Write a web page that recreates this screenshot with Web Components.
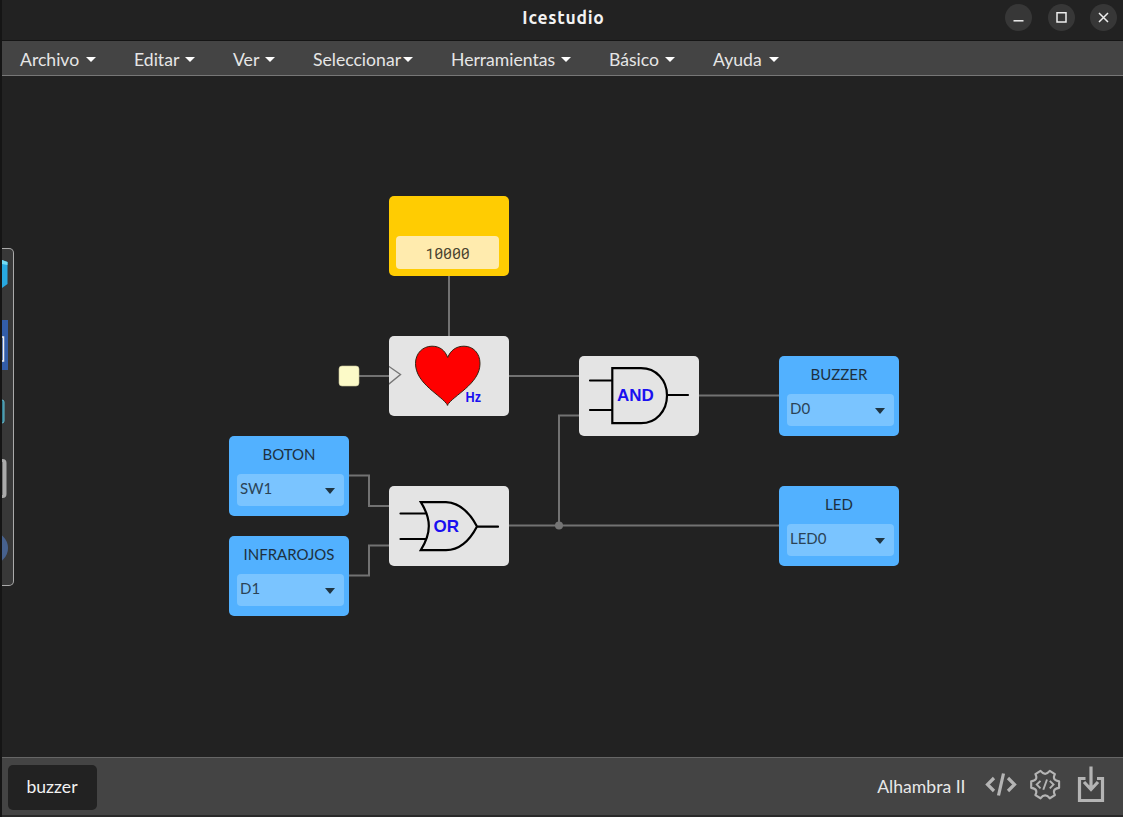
<!DOCTYPE html>
<html lang="es">
<head>
<meta charset="utf-8">
<title>Icestudio</title>
<style>
html,body{margin:0;height:100%;background:#222;overflow:hidden}
body{font-family:Lato,"Open Sans",sans-serif;color:#eee}
</style>
</head>
<body>
<ice-app></ice-app>
<script>
const define = (name, html, setup) => customElements.define(name, class extends HTMLElement {
  connectedCallback() {
    if (this.shadowRoot) return;
    const t = document.createElement('template');
    t.innerHTML = html;
    this.attachShadow({mode: 'open'}).append(t.content.cloneNode(true));
    if (setup) setup(this, this.shadowRoot);
  }
});
const place = el => {
  el.style.left = el.getAttribute('x') + 'px';
  el.style.top = el.getAttribute('y') + 'px';
};

define('window-button', `<style>
:host{display:block;width:27px;height:27px;border-radius:50%;background:#373737}
svg{display:block} path{fill:none;stroke:#eee;stroke-width:1.5}
</style><svg width="27" height="27"><path/></svg>`, (el, r) => {
  r.querySelector('path').setAttribute('d', {
    min: 'M8.5 16.800H18.5', max: 'M9 8.8H18V18H9Z', close: 'M9 9L18 18M18 9L9 18'
  }[el.getAttribute('kind')]);
});

define('title-bar', `<style>
:host{display:grid;grid-template-columns:1fr auto 1fr;align-items:center;height:41px;box-sizing:border-box;padding:0 6px 5px 8px;border-bottom:1px solid #151515;background:#222}
h1{grid-column:2;margin:0;font:bold 17.5px/24px Ubuntu,"Noto Sans",sans-serif;color:#f2f2f2;letter-spacing:.75px}
div{display:flex;justify-content:flex-end;gap:15.5px}
</style><h1><slot></slot></h1><div><window-button kind="min"></window-button><window-button kind="max"></window-button><window-button kind="close"></window-button></div>`);

define('menu-item', `<style>
:host{display:flex;justify-content:space-between;align-items:center;white-space:nowrap;font-size:17.6px;line-height:34px}
span{padding-top:2px;height:34px;box-sizing:border-box;line-height:33px}
i{width:0;height:0;border:5px solid transparent;border-top-color:#fff;border-bottom:0;margin-top:2px}
</style><span><slot></slot></span><i></i>`, el => { el.style.width = el.getAttribute('w') + 'px'; });

define('menu-bar', `<style>
:host{display:flex;gap:38px;height:35px;box-sizing:border-box;padding-left:18px;background:#444;border-bottom:1px solid #777;color:#e6e6e6}
</style><slot></slot>`);

define('pin-block', `<style>
:host{position:absolute;width:120px;height:80px;box-sizing:border-box;padding:7.5px 5.5px 5px 7.5px;border-radius:5px;background:#52b1ff;color:#1d3040;display:flex;flex-direction:column}
.n{font-size:15px;line-height:21px;text-align:center;height:30px;padding-right:2px}
.s{display:flex;justify-content:space-between;height:32px;box-sizing:border-box;border-radius:4px;background:#7ac4ff;padding:0 8.8px 0 3.5px;font-size:15px;line-height:29px;color:#2b4356}
i{border:5.5px solid transparent;border-top:6.5px solid #1f3442;border-bottom:0;height:0;margin-top:14.5px}
</style><div class="n"><slot></slot></div><div class="s"><span></span><i></i></div>`, (el, r) => {
  place(el); r.querySelector('span').textContent = el.getAttribute('pin');
});

define('constant-block', `<style>
:host{position:absolute;width:120px;height:80px;box-sizing:border-box;padding:40px 10px 7px 7px;border-radius:5px;background:#ffcc02}
div{height:33px;border-radius:4px;background:#ffebae;color:#49422f;font:15px/35px "Roboto Mono","Noto Sans Mono","DejaVu Sans Mono",monospace;text-align:center;letter-spacing:-.2px}
</style><div><slot></slot></div>`, place);

define('logic-block', `<style>
:host{position:absolute;width:120px;height:80px;border-radius:5px;background:#e4e4e4;overflow:hidden}
svg{display:block} path{fill:none;stroke:#000;stroke-width:2.2;stroke-linecap:round}
text{font:bold 17px "Liberation Sans",Arial,sans-serif;fill:#1a10f0}
</style><svg width="120" height="80"></svg>`, (el, r) => {
  place(el);
  r.querySelector('svg').innerHTML = {
    heart: '<path d="M0 30.500L11.500 38.500L0 48" style="stroke:#777;stroke-width:1.400"/><path d="M58.500 69C53 59.500 26.500 48 26.500 27.500C26.500 17 34 10.200 43 10.200C51 10.200 56 14.500 58.700 21.500C61.500 14.500 67 10.200 75 10.200C84 10.200 91 17 91 27.500C91 48 64 59.500 58.500 69Z" style="fill:#f00;stroke:#321;stroke-width:1"/><text x="76.500" y="66" textLength="15.500" lengthAdjust="spacingAndGlyphs" style="font-size:14px">Hz</text>',
    and: '<path d="M33.300 12.200H62C77 12.200 88 24 88 39.500C88 55 77 67.200 62 67.200H33.300ZM11 24.500H33M11 54H33M88 39H109"/><text x="38" y="45">AND</text>',
    or: '<path d="M31.800 16.200H57C72 17 82 29 88 40.500C82 52 72 64 57 64.200H31.800C42.500 47 42.500 33 31.800 16.200ZM11.500 27.500H37M11.500 53H37M88 40.700H109"/><text x="44.500" y="46">OR</text>'
  }[el.getAttribute('kind')];
});

define('wire-layer', `<style>
:host{position:absolute;inset:0} svg{display:block}
path{fill:none;stroke:#727272;stroke-width:2}
</style><svg width="1123" height="681" viewBox="0 76 1123 681">
<path d="M449 276V337M359 376H389M509 376H579M699 395.500H779M349 475.500H369V506H389M349 575.500H369V545.500H389M509 525.500H779M559 525.500V415.500H579"/>
<circle cx="559" cy="525.500" r="4" fill="#757575"/>
<rect x="339" y="366" width="20" height="20" rx="3" fill="#fcfac8" stroke="#c9c69b" stroke-width=".6"/></svg>`);

define('side-palette', `<style>
:host{position:absolute;left:2px;top:172px;width:12px;height:338px;box-sizing:border-box;border:1px solid #aaa;border-left:0;border-radius:0 5px 5px 0;background:#383838;overflow:hidden}
svg{display:block}
</style><svg width="11" height="336" viewBox="2 249 11 336">
<path d="M2 260L7.500 262V284L2 288Z" fill="#28a8e0"/><path d="M2 260L7.500 262V265L2 264Z" fill="#74dcf5"/>
<path d="M2 320H8V370H2Z" fill="#335da8"/><path d="M2 337H3.500V361H2" fill="none" stroke="#eee" stroke-width="1.500"/>
<rect x="-4" y="400" width="8" height="23" rx="2" fill="#347d91" stroke="#65bdd0"/>
<rect x="-6" y="459" width="12.500" height="39" rx="4" fill="#aaa"/><rect x="-6" y="462" width="9" height="33" fill="#777"/>
<circle cx="-8" cy="548" r="16" fill="#47618d"/></svg>`);

define('design-canvas', `<style>
:host{display:block;position:relative;flex:1;background:#222}
</style><slot></slot>`);

define('tool-icon', `<style>
:host{display:block} svg{display:block}
path{fill:none;stroke:#b4b4b4;stroke-width:3.2}
</style><svg width="36" height="40"><path/></svg>`, (el, r) => {
  const k = el.getAttribute('kind'), s = r.querySelector('svg');
  s.innerHTML = {
    code: '<path d="M11 13L4.500 19.500L11 26M25 13L31.500 19.500L25 26M20.500 8.500L15.500 30.500"/>',
    gear: '<g transform="translate(1.400 1) scale(.93)"><path style="stroke-width:2.300;stroke-linejoin:round" d="M13 5.300Q18 11.500 23 5.300L28.500 8.700Q25 15.500 33 16.500V23.500Q25 24.500 28.500 31.300L23 34.700Q18 28.500 13 34.700L7.500 31.300Q11 24.500 3 23.500V16.500Q11 15.500 7.500 8.700Z"/><path style="stroke-width:2.100" d="M13 16L9 20L13 24M23 16L27 20L23 24M20 14.500L16 25.500"/></g>',
    save: '<path d="M12.500 13.500H6.500V35.500H29.500V13.500H24M18 1.500V24M11 17L18 24.500L25 17"/>'
  }[k];
});

define('status-bar', `<style>
:host{display:flex;align-items:center;height:60px;box-sizing:border-box;background:#444;border-top:1px solid #666;border-bottom:2px solid #292929;padding:0 14px 0 6px}
.tab{width:89px;height:45px;border-radius:5px;background:#222;text-align:center;font-size:17.6px;line-height:43px;color:#f1f1f1;margin-top:2px;padding-right:1px;box-sizing:border-box}
.board{font-size:17.6px;color:#e8e8e8;margin:0 17.5px 0 auto}
.icons{display:flex;margin-top:-4px}
tool-icon{margin-right:8px} tool-icon:nth-child(2){margin-right:10px} tool-icon:last-child{margin:0}
</style><div class="tab"><slot name="tab"></slot></div><div class="board"><slot name="board"></slot></div>
<div class="icons"><tool-icon kind="code"></tool-icon><tool-icon kind="gear"></tool-icon><tool-icon kind="save"></tool-icon></div>`);

define('ice-app', `<style>
:host{display:flex;flex-direction:column;height:817px;width:1123px;box-sizing:border-box;border-left:2px solid #151515;overflow:hidden}
design-canvas{margin-left:-2px;border-left:0}
design-canvas::before{content:"";position:absolute;left:0;top:0;bottom:0;width:2px;background:#151515}
</style>
<title-bar>Icestudio</title-bar>
<menu-bar><menu-item w="76">Archivo</menu-item><menu-item w="61">Editar</menu-item><menu-item w="42">Ver</menu-item><menu-item w="100">Seleccionar</menu-item><menu-item w="120">Herramientas</menu-item><menu-item w="66">Básico</menu-item><menu-item w="66">Ayuda</menu-item></menu-bar>
<design-canvas>
<wire-layer></wire-layer>
<constant-block x="389" y="120.3">10000</constant-block>
<logic-block kind="heart" x="389" y="260.3"></logic-block>
<logic-block kind="and" x="579" y="280.3"></logic-block>
<logic-block kind="or" x="389" y="410.3"></logic-block>
<pin-block x="229" y="360.3" pin="SW1">BOTON</pin-block>
<pin-block x="229" y="460.3" pin="D1">INFRAROJOS</pin-block>
<pin-block x="779" y="280.3" pin="D0">BUZZER</pin-block>
<pin-block x="779" y="410.3" pin="LED0">LED</pin-block>
<side-palette></side-palette>
</design-canvas>
<status-bar><span slot="tab">buzzer</span><span slot="board">Alhambra II</span></status-bar>`);
</script>
</body>
</html>
